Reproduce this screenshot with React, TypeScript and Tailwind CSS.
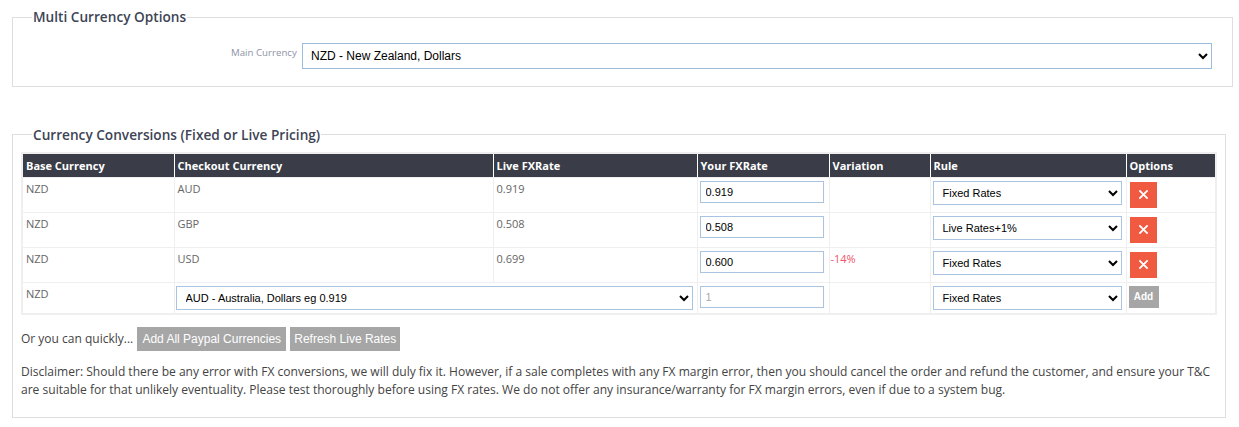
import React from "react";

const selectCls = "h-[24px] border border-[#a9c3e0] bg-white pl-[5px] text-[11px] text-black font-['Liberation_Sans',sans-serif] rounded-none";
const inputCls = "block h-[22px] w-[124px] border border-[#a9c3e0] bg-white px-[5px] text-[11px] text-black placeholder:text-[#aaa] font-['Liberation_Sans',sans-serif] outline-none";
const td = "border border-[#efefef] align-top p-0 h-[35px]";
const tdLast = "border border-[#efefef] align-top p-0 h-[32px]";
const th = "border border-x-white border-y-[#efefef] bg-[#3a3c48] text-white text-left text-[11px] font-bold px-[3px] pt-[1px] h-[24px] align-middle";
const grayBtn = "bg-[#a6a6a6] text-white font-['Liberation_Sans',sans-serif] text-[12px]";

function Rule({ value }: { value: string }) {
  return (
    <select defaultValue={value} className={`${selectCls} block w-[189px] mt-[3px] ml-[2px]`}>
      <option>Fixed Rates</option>
      <option>Live Rates+1%</option>
    </select>
  );
}

function Del() {
  return (
    <button className="ml-[3px] mt-[4px] flex h-[26px] w-[27px] items-center justify-center bg-[#ef5a40]">
      <svg width="11" height="11" viewBox="0 0 12 12" fill="none" stroke="white" strokeWidth="2">
        <path d="M1.5 1.5l9 9M10.5 1.5l-9 9" />
      </svg>
    </button>
  );
}

function Row({ cur, live, rate, variation, rule }: { cur: string; live: string; rate: string; variation?: string; rule: string }) {
  return (
    <tr>
      <td className={td}><div className="pl-[3px] pt-[3px]">NZD</div></td>
      <td className={td}><div className="pl-[3px] pt-[3px]">{cur}</div></td>
      <td className={td}><div className="pl-[3px] pt-[3px]">{live}</div></td>
      <td className={td}>
        <input readOnly value={rate} className={`${inputCls} mt-[3px] ml-[2px]`} />
      </td>
      <td className={td}>
        <div className="pl-[1px] pt-[3px] text-[#f0556b]">{variation}</div>
      </td>
      <td className={td}><Rule value={rule} /></td>
      <td className={td}><Del /></td>
    </tr>
  );
}

export default function App() {
  return (
    <div className="h-[427px] w-[1239px] overflow-hidden bg-white pl-[12px] pt-[8px] font-['Open_Sans',sans-serif] text-[11px] text-[#666]">
      <fieldset className="h-[79px] w-[1214px] border border-[#dedede] pl-[19px] pr-[20px]">
        <legend className="px-[1px] text-[13.65px] font-semibold leading-[18px] text-[#3d4455]">Multi Currency Options</legend>
        <div className="flex items-start pl-[199px] pt-[17px]">
          <span className="w-[66px] pt-[3px] text-[9.7px] leading-[14px] whitespace-nowrap text-[#8d93a6]">Main Currency</span>
          <select className="ml-[5px] h-[26px] w-[910px] border border-[#9dbbdc] bg-white pl-[4px] text-[12px] text-black font-['Liberation_Sans',sans-serif] rounded-none">
            <option>NZD - New Zealand, Dollars</option>
          </select>
        </div>
      </fieldset>

      <fieldset className="mt-[38px] h-[293px] w-[1214px] border border-[#dedede] pl-[8px]">
        <legend className="ml-[11px] px-[1px] pt-[1px] text-[13.65px] font-semibold leading-[18px] text-[#3d4455]">Currency Conversions (Fixed or Live Pricing)</legend>
        <div className="mt-[8px]">
          <table className="w-[1194px] table-fixed border-collapse border-2 border-[#efefef]">
            <colgroup>
              <col className="w-[152px]" />
              <col className="w-[319px]" />
              <col className="w-[204px]" />
              <col className="w-[132px]" />
              <col className="w-[101px]" />
              <col className="w-[196px]" />
              <col className="w-[90px]" />
            </colgroup>
            <thead>
              <tr>
                <th className={th}>Base Currency</th>
                <th className={th}>Checkout Currency</th>
                <th className={th}>Live FXRate</th>
                <th className={th}>Your FXRate</th>
                <th className={th}>Variation</th>
                <th className={th}>Rule</th>
                <th className={th}>Options</th>
              </tr>
            </thead>
            <tbody>
              <Row cur="AUD" live="0.919" rate="0.919" rule="Fixed Rates" />
              <Row cur="GBP" live="0.508" rate="0.508" rule="Live Rates+1%" />
              <Row cur="USD" live="0.699" rate="0.600" variation="-14%" rule="Fixed Rates" />
              <tr>
                <td className={tdLast}><div className="pl-[3px] pt-[3px]">NZD</div></td>
                <td className={tdLast} colSpan={2}>
                  <select className={`${selectCls} block w-[517px] mt-[3px] ml-[1px]`}>
                    <option>AUD - Australia, Dollars eg 0.919</option>
                  </select>
                </td>
                <td className={tdLast}>
                  <input placeholder="1" className={`${inputCls} mt-[3px] ml-[2px]`} />
                </td>
                <td className={tdLast}></td>
                <td className={tdLast}><Rule value="Fixed Rates" /></td>
                <td className={tdLast}>
                  <button className={`${grayBtn} ml-[2px] mt-[3px] block h-[22px] w-[30px] !text-[10px] font-bold`}>Add</button>
                </td>
              </tr>
            </tbody>
          </table>
        </div>
        <div className="mt-[12px] flex items-center text-[12px] text-[#444]">
          <span>Or you can quickly...</span>
          <button className={`${grayBtn} ml-[4px] h-[24px] w-[149px]`}>Add All Paypal Currencies</button>
          <button className={`${grayBtn} ml-[4px] h-[24px] w-[110px]`}>Refresh Live Rates</button>
        </div>
        <p className="mt-[12px] w-[1196px] text-[12.05px] leading-[18px] text-[#444]">
          Disclaimer: Should there be any error with FX conversions, we will duly fix it. However, if a sale completes with any FX margin error, then you should cancel the order and refund the customer, and ensure your T&amp;C are suitable for that unlikely eventuality. Please test thoroughly before using FX rates. We do not offer any insurance/warranty for FX margin errors, even if due to a system bug.
        </p>
      </fieldset>
    </div>
  );
}
